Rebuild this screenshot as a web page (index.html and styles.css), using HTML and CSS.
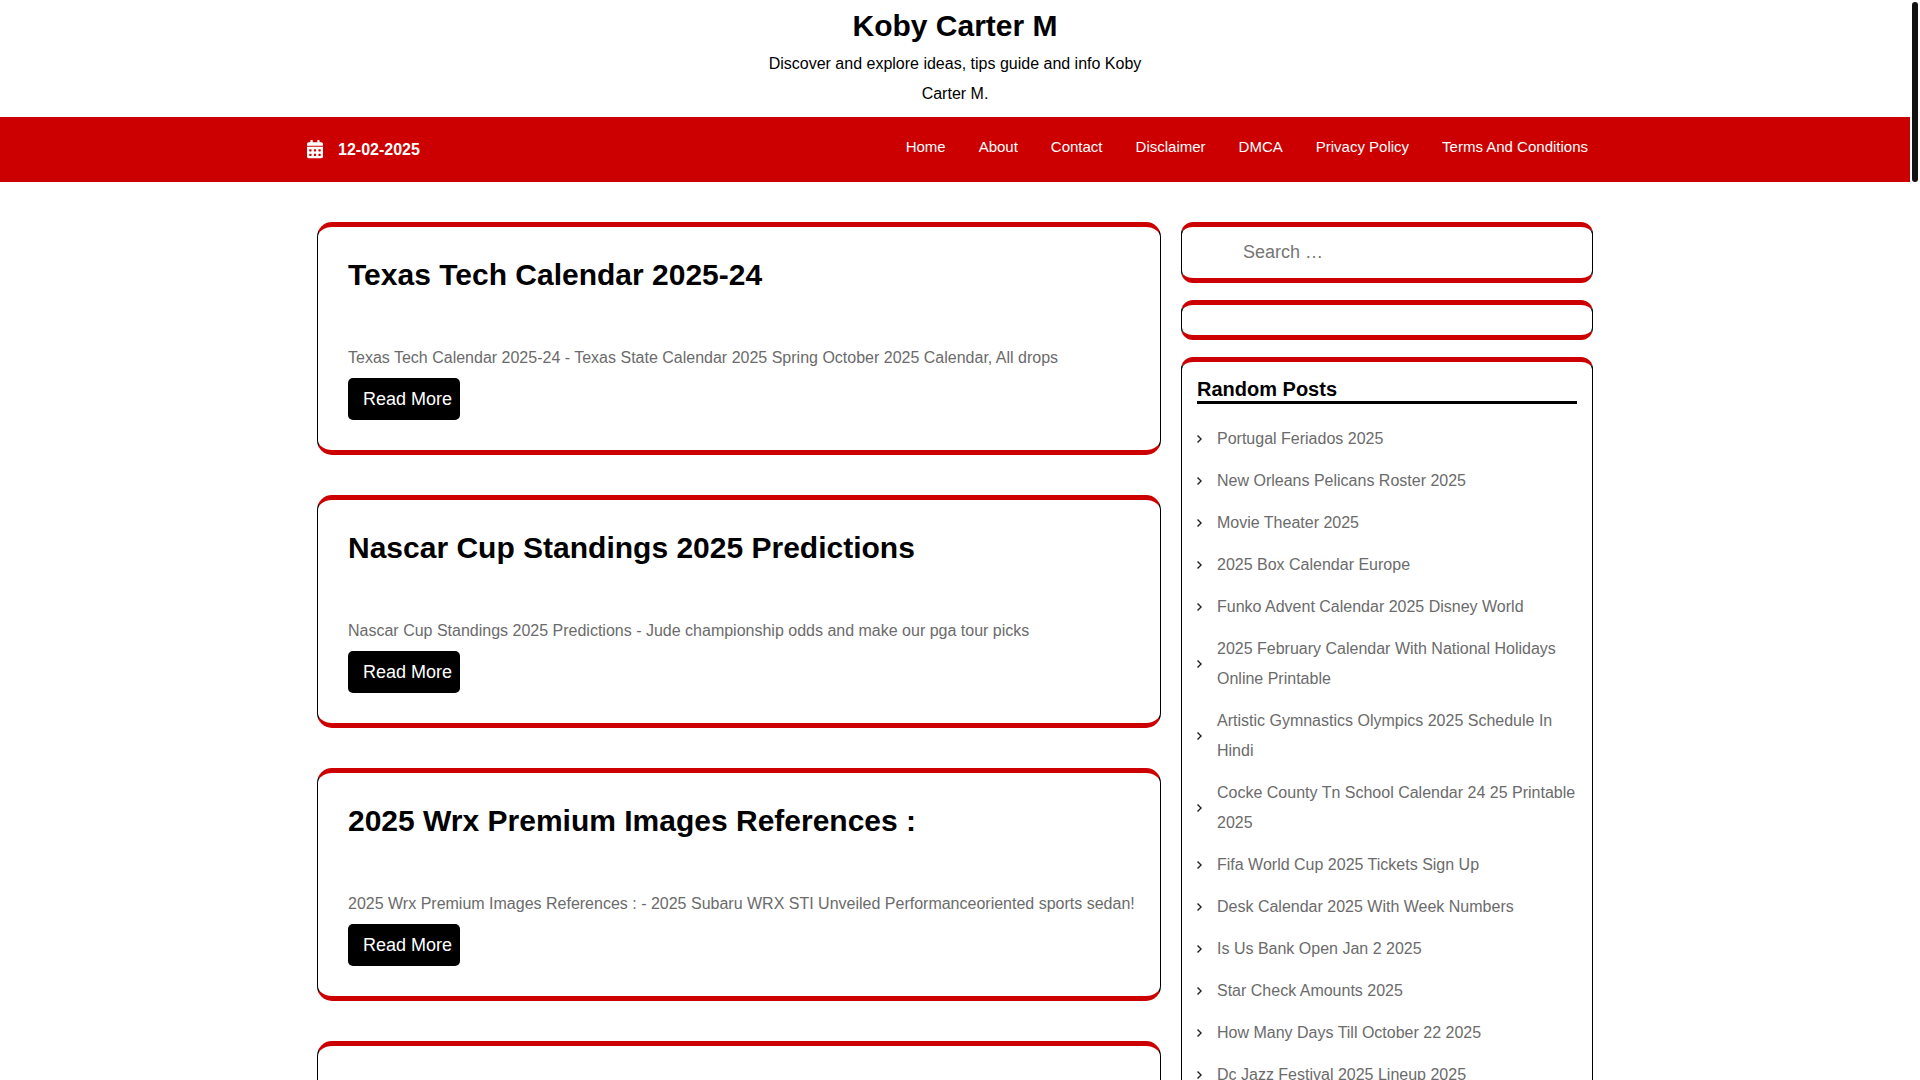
FILE: index.html
```html
<!DOCTYPE html>
<html lang="en">
	<head>
		<meta charset="UTF-8">
		<meta name="viewport" content="width=device-width, initial-scale=1">
		<title>Koby Carter M</title>
		<link rel="stylesheet" href="styles.css">
	</head>
	<body>
		<header class="site_header">
			<h1 class="site_title"><a href="#">Koby Carter M</a></h1>
			<p class="site_description">Discover and explore ideas, tips guide and info Koby Carter M.</p>
		</header>
		<div class="menu_bar">
			<div class="menu_inner">
				<div class="date">
					<svg class="date_icon" viewBox="0 0 448 512" preserveAspectRatio="xMidYMin meet" aria-hidden="true">
						<path fill="currentColor" d="M0 464c0 26.500 21.500 48 48 48h352c26.500 0 48-21.500 48-48V192H0v272zm320-196c0-6.600 5.400-12 12-12h40c6.600 0 12 5.400 12 12v40c0 6.600-5.400 12-12 12h-40c-6.600 0-12-5.400-12-12v-40zm0 128c0-6.600 5.400-12 12-12h40c6.600 0 12 5.400 12 12v40c0 6.600-5.400 12-12 12h-40c-6.600 0-12-5.400-12-12v-40zM192 268c0-6.600 5.400-12 12-12h40c6.600 0 12 5.400 12 12v40c0 6.600-5.400 12-12 12h-40c-6.600 0-12-5.400-12-12v-40zm0 128c0-6.600 5.400-12 12-12h40c6.600 0 12 5.400 12 12v40c0 6.600-5.400 12-12 12h-40c-6.600 0-12-5.400-12-12v-40zM64 268c0-6.600 5.400-12 12-12h40c6.600 0 12 5.400 12 12v40c0 6.600-5.400 12-12 12H76c-6.600 0-12-5.400-12-12v-40zm0 128c0-6.600 5.400-12 12-12h40c6.600 0 12 5.400 12 12v40c0 6.600-5.400 12-12 12H76c-6.600 0-12-5.400-12-12v-40zM400 64h-48V16c0-8.800-7.200-16-16-16h-32c-8.800 0-16 7.200-16 16v48H160V16c0-8.800-7.200-16-16-16h-32c-8.800 0-16 7.200-16 16v48H48C21.500 64 0 85.500 0 112v48h448v-48c0-26.500-21.500-48-48-48z"/>
					</svg>
					<span>12-02-2025</span>
				</div>
				<nav>
					<ul class="menu">
						<li><a href="#">Home</a></li>
						<li><a href="#">About</a></li>
						<li><a href="#">Contact</a></li>
						<li><a href="#">Disclaimer</a></li>
						<li><a href="#">DMCA</a></li>
						<li><a href="#">Privacy Policy</a></li>
						<li><a href="#">Terms And Conditions</a></li>
					</ul>
				</nav>
			</div>
		</div>
		<div class="container">
			<main class="posts">
				<article class="post">
					<h2 class="post_title"><a href="#">Texas Tech Calendar 2025-24</a></h2>
					<p class="post_text">Texas Tech Calendar 2025-24 - Texas State Calendar 2025 Spring October 2025 Calendar, All drops</p>
					<a class="read_more" href="#">Read More</a>
				</article>
				<article class="post">
					<h2 class="post_title"><a href="#">Nascar Cup Standings 2025 Predictions</a></h2>
					<p class="post_text">Nascar Cup Standings 2025 Predictions - Jude championship odds and make our pga tour picks</p>
					<a class="read_more" href="#">Read More</a>
				</article>
				<article class="post">
					<h2 class="post_title"><a href="#">2025 Wrx Premium Images References :</a></h2>
					<p class="post_text">2025 Wrx Premium Images References : - 2025 Subaru WRX STI Unveiled Performanceoriented sports sedan!</p>
					<a class="read_more" href="#">Read More</a>
				</article>
				<article class="post"></article>
			</main>
			<aside class="sidebar">
				<form class="widget search">
					<input type="search" class="search_field" placeholder="Search …" aria-label="Search">
				</form>
				<div class="widget"></div>
				<section class="widget">
					<h3 class="widget_title">Random Posts</h3>
					<ul class="random_posts">
						<li><a href="#">Portugal Feriados 2025</a></li>
						<li><a href="#">New Orleans Pelicans Roster 2025</a></li>
						<li><a href="#">Movie Theater 2025</a></li>
						<li><a href="#">2025 Box Calendar Europe</a></li>
						<li><a href="#">Funko Advent Calendar 2025 Disney World</a></li>
						<li><a href="#">2025 February Calendar With National Holidays Online Printable</a></li>
						<li><a href="#">Artistic Gymnastics Olympics 2025 Schedule In Hindi</a></li>
						<li><a href="#">Cocke County Tn School Calendar 24 25 Printable 2025</a></li>
						<li><a href="#">Fifa World Cup 2025 Tickets Sign Up</a></li>
						<li><a href="#">Desk Calendar 2025 With Week Numbers</a></li>
						<li><a href="#">Is Us Bank Open Jan 2 2025</a></li>
						<li><a href="#">Star Check Amounts 2025</a></li>
						<li><a href="#">How Many Days Till October 22 2025</a></li>
						<li><a href="#">Dc Jazz Festival 2025 Lineup 2025</a></li>
					</ul>
				</section>
			</aside>
		</div>
		<div class="scroll_thumb j-scroll_thumb"></div>
		<script>
			//move the thumb with the page
			var thumb = document.querySelector('.j-scroll_thumb');
			window.addEventListener('scroll', function(){
				var max = document.documentElement.scrollHeight - window.innerHeight;
				var room = window.innerHeight - thumb.offsetHeight - 4;
				thumb.style.top = (2 + room * window.scrollY / max) + 'px';
			});
		</script>
	</body>
</html>
```
FILE: styles.css
```css
* {
	box-sizing: border-box;
}
html {
	scrollbar-width: none;
}
body {
	margin: 0;
	padding-right: 10px;
	background: #fff;
	color: #6b6b6b;
	font-family: "Liberation Sans", Arial, sans-serif;
	font-size: 16px;
	line-height: 30px;
}
h1, h2, h3, p, ul {
	margin: 0;
	padding: 0;
}
ul {
	list-style: none;
}
a {
	color: inherit;
	text-decoration: none;
}

/* header */
.site_header {
	padding: 8px 15px;
	color: #000;
	text-align: center;
}
.site_title {
	margin-bottom: 5px;
	font-size: 30px;
	line-height: 36px;
}
.site_description {
	max-width: 400px;
	margin: 0 auto;
}
.menu_bar {
	background: #cc0000;
	color: #fff;
}
.menu_inner {
	display: flex;
	justify-content: space-between;
	max-width: 1316px;
	min-height: 65px;
	margin: 0 auto;
	padding: 15px 25px 15px 10px;
	flex-wrap: wrap;
}
.date {
	display: flex;
	align-items: center;
	gap: 15px;
	font-weight: bold;
}
.date_icon {
	width: 16px;
	height: 20px;
}
.menu {
	display: flex;
	flex-wrap: wrap;
	gap: 0 33px;
	font-size: 15px;
}

/* content */
.container {
	display: grid;
	grid-template-columns: minmax(0, 844fr) minmax(0, 412fr);
	gap: 20px;
	align-items: start;
	max-width: 1316px;
	margin: 0 auto;
	padding: 40px 20px;
}
.posts {
	display: grid;
	gap: 40px;
}
.post {
	min-height: 233px;
	padding: 30px 25px 30px 30px;
	border: 1px solid #000;
	border-top: 5px solid #cc0000;
	border-bottom: 5px solid #cc0000;
	border-radius: 15px;
}
.post_title {
	margin-bottom: 50px;
	color: #000;
	font-size: 30px;
	line-height: 36px;
}
.post_text {
	margin-bottom: 5px;
}
.read_more {
	display: block;
	width: 112px;
	padding: 6px 0 6px 15px;
	border-radius: 5px;
	background: #000;
	color: #fff;
	font-size: 18px;
}

/* sidebar */
.sidebar {
	display: grid;
	gap: 17px;
}
.widget {
	padding: 15px;
	border: 1px solid #000;
	border-top: 5px solid #cc0000;
	border-bottom: 5px solid #cc0000;
	border-radius: 12px;
}
.search {
	display: flex;
	padding-left: 61px;
}
.search_field {
	width: 100%;
	height: 21px;
	padding: 0;
	border: 0;
	outline: 0;
	background: none;
	font: 18px "Liberation Sans", Arial, sans-serif;
	-webkit-appearance: none;
	appearance: none;
}
.search_field::placeholder {
	color: #757575;
}
.widget_title {
	margin-bottom: 20px;
	border-bottom: 3px solid #000;
	color: #000;
	font-size: 20px;
	line-height: 24px;
}
.random_posts {
	display: grid;
	gap: 12px;
}
.random_posts li {
	display: flex;
	align-items: center;
	gap: 15px;
}
.random_posts li::before {
	content: "";
	flex: none;
	width: 5px;
	height: 8px;
	background: #222;
	clip-path: polygon(0 12%, 20% 0, 100% 50%, 20% 100%, 0 88%, 62% 50%);
}

.scroll_thumb {
	position: fixed;
	top: 2px;
	right: 2px;
	width: 6px;
	height: 180px;
	border-radius: 3px;
	background: #111;
}
```
